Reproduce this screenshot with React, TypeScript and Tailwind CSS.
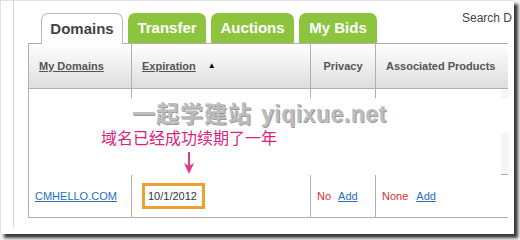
export default function App() {
  return (
    <div className="w-[520px] h-[240px] bg-[#f4f4f4] overflow-hidden" style={{ fontFamily: '"Liberation Sans", Arial, sans-serif' }}>
      <div className="relative w-[514px] h-[234px] bg-white border-t border-l border-[#e2e2e2] shadow-[4px_4px_3px_#3a3a3a]">
        <div className="ml-[12px] w-[497px] h-[226px] border-l border-[#d6d6d6] pt-[12px] pl-[14px]">
          {/* tabs */}
          <div className="flex items-end h-[30px] pl-[13px] gap-[5px]">
            <div className="relative z-10 w-[82px] h-[31px] -mb-px bg-white border border-b-0 border-[#b8b8b8] rounded-t-[7px] flex items-center justify-center text-[15px] font-bold text-[#444]">
              Domains
            </div>
            <GreenTab label="Transfer" w="w-[78px]" />
            <GreenTab label="Auctions" w="w-[83px]" />
            <GreenTab label="My Bids" w="w-[78px]" />
          </div>

          {/* table */}
          <div className="w-[480px] border-l border-[#b0b0b0]">
            <div className="grid grid-cols-[102px_179px_65px_134px] h-[46px] border-t border-b border-[#b0b0b0] bg-gradient-to-b from-white to-[#dedede] text-[11px] font-bold text-[#555]">
              <div className="flex items-center pl-[10px]"><span className="underline">My Domains</span></div>
              <div className="flex items-center pl-[10px] border-l border-[#b0b0b0]">
                <span className="underline">Expiration</span>
                <span className="ml-[12px] text-[8px] text-black">▲</span>
              </div>
              <div className="flex items-center justify-center border-l border-[#b0b0b0]">Privacy</div>
              <div className="flex items-center pl-[10px] border-l border-[#b0b0b0]">Associated Products</div>
            </div>
            <div className="grid grid-cols-[102px_179px_65px_134px] h-[86px] border-b border-[#b0b0b0]">
              <div />
              <div className="border-l border-[#b0b0b0]" />
              <div className="border-l border-[#b0b0b0]" />
              <div className="border-l border-[#b0b0b0] bg-[linear-gradient(to_right,#fff_94%,#f5f5f5_94%)]" />
            </div>
            <div className="grid grid-cols-[102px_179px_65px_134px] h-[43px] border-b border-[#b0b0b0] text-[11px]">
              <div className="flex items-center pl-[6px]"><span className="text-[#2a6ebb] underline">CMHELLO.COM</span></div>
              <div className="flex items-center pl-[10px] border-l border-[#b0b0b0]">
                <span className="w-[63px] h-[26px] border-[3px] border-[#f0a033] flex items-center pl-[3px] text-[#333]">10/1/2012</span>
              </div>
              <div className="flex items-center pl-[6px] gap-[7px] border-l border-[#b0b0b0]">
                <span className="text-[#d83030]">No</span>
                <span className="text-[#2a6ebb] underline">Add</span>
              </div>
              <div className="flex items-center pl-[6px] gap-[8px] border-l border-[#b0b0b0]">
                <span className="text-[#d83030]">None</span>
                <span className="text-[#2a6ebb] underline">Add</span>
              </div>
            </div>
          </div>
        </div>

        <div className="absolute left-[461px] top-[8px] whitespace-nowrap text-[12px] text-[#444]">Search D</div>

        {/* pasted annotation over the empty row */}
        <div className="absolute left-[28px] top-[97px] w-[472px] h-[77px] bg-white" />
        <div className="absolute left-[28px] top-[97px] w-[481px] h-[35px] bg-white" />
        <div className="absolute left-[131px] top-[98px] flex items-baseline gap-[9px] font-bold text-[#bdbdbd] [text-shadow:1px_1px_0_#9a9a9a]">
          <span className="text-[23px] leading-[26px] tracking-[1px]" style={{ fontFamily: '"Noto Sans CJK SC", sans-serif' }}>一起学建站</span>
          <span className="text-[23px] leading-[26px] tracking-[0.5px]" style={{ fontFamily: '"Liberation Sans", Arial, sans-serif' }}>yiqixue.net</span>
        </div>
        <div className="absolute left-[100px] top-[126px] text-[16px] leading-[20px] text-[#d9237f]" style={{ fontFamily: '"Noto Sans CJK SC", sans-serif' }}>
          域名已经成功续期了一年
        </div>
        <svg className="absolute left-[182px] top-[151px]" width="12" height="23" viewBox="0 0 12 23">
          <line x1="6" y1="0" x2="6" y2="15" stroke="#e03a8a" strokeWidth="2" />
          <polygon points="1,11 6,22 11,11 6,14" fill="#e03a8a" />
        </svg>
      </div>
    </div>
  );
}

function GreenTab({ label, w }: { label: string; w: string }) {
  return (
    <div className={`${w} h-[30px] bg-[#8cc43e] rounded-t-[7px] flex items-center justify-center text-[15px] font-bold text-white`}>
      {label}
    </div>
  );
}
